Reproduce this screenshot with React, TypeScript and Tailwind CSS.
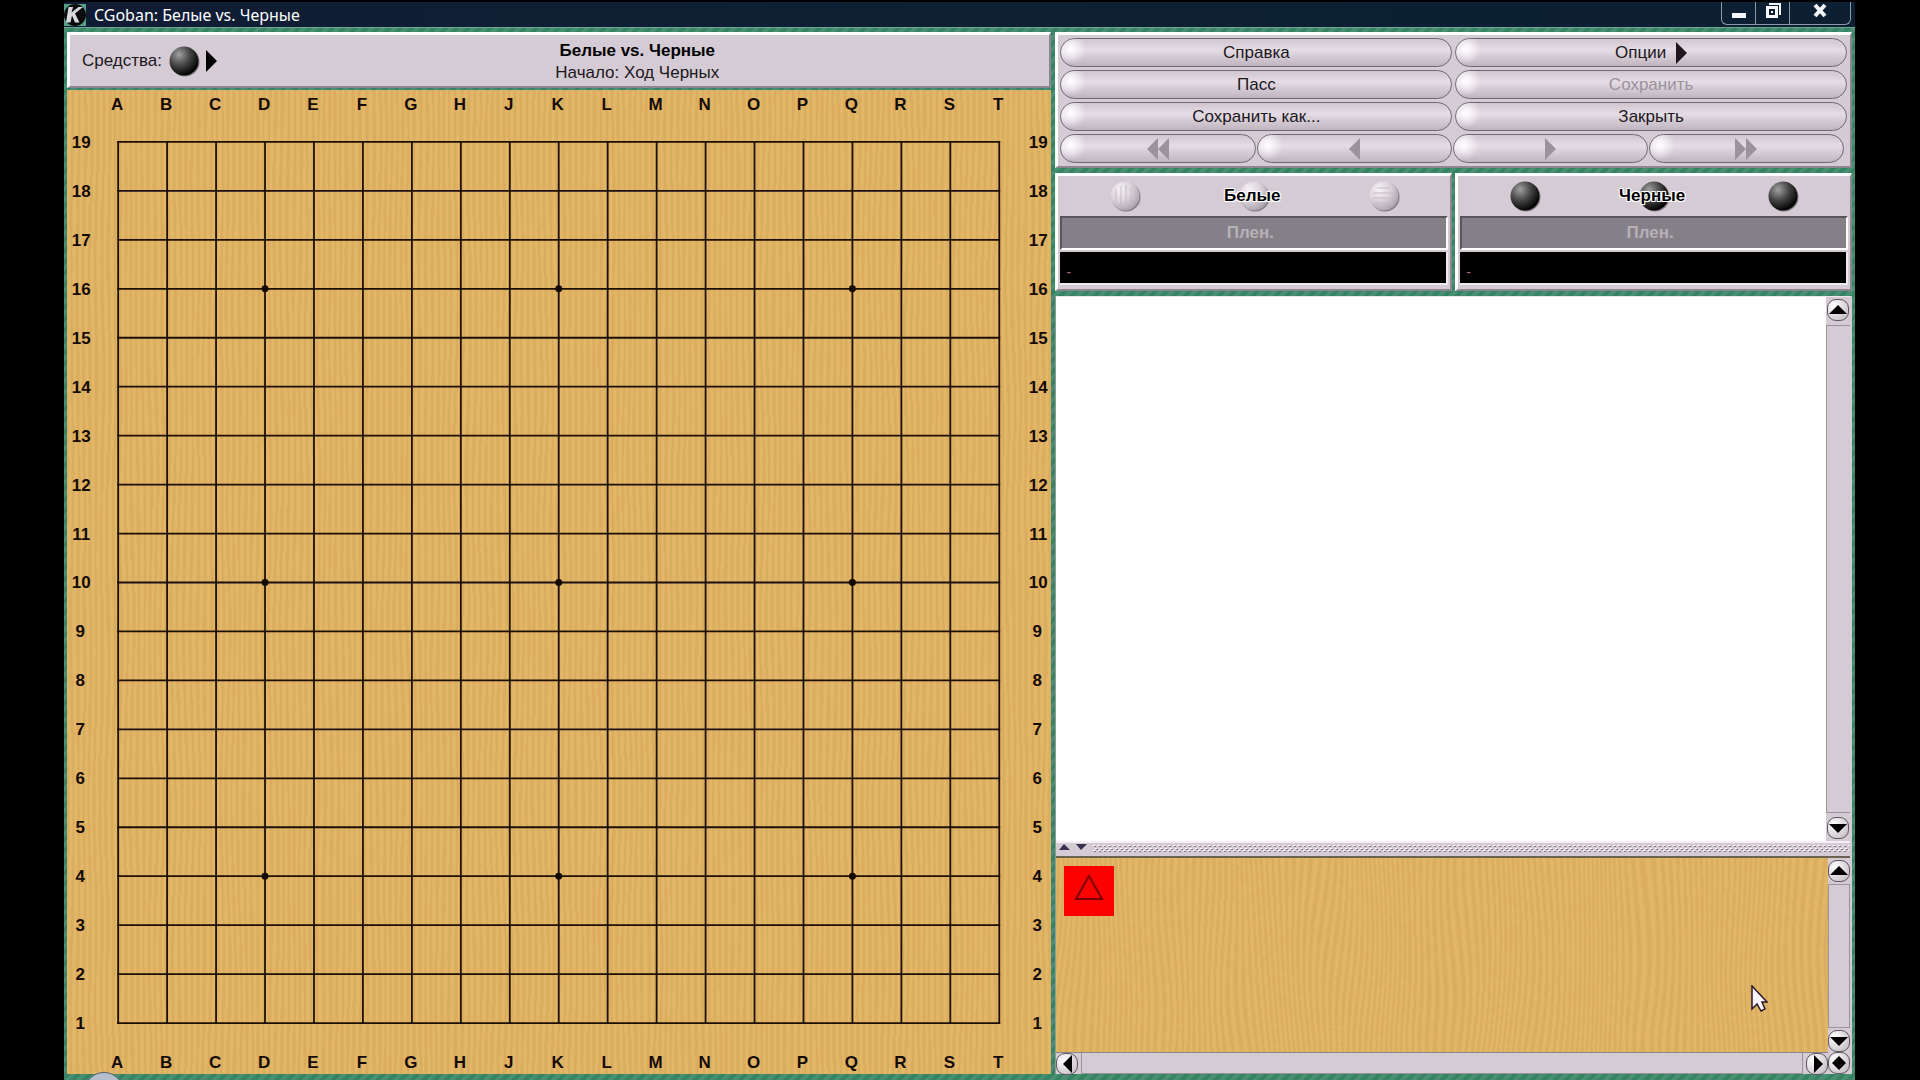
import type { ReactNode } from 'react'

const COLS = ['A', 'B', 'C', 'D', 'E', 'F', 'G', 'H', 'J', 'K', 'L', 'M', 'N', 'O', 'P', 'Q', 'R', 'S', 'T']
const STARS = [3, 9, 15]
const STEP = 49
const LEFT = 51
const TOP = 52

export default function App() {
  return (
    <div className="h-screen bg-black pr-[65px] pl-16 font-['Liberation_Sans',Arial,sans-serif] text-[17px] text-[#1c181c]">
      <WoodFilters />
      <div className="relative flex h-full flex-col overflow-hidden">
        <TitleBar />
        <div className="flex min-h-0 flex-1 gap-1 bg-[#3d8a6c] bg-[repeating-linear-gradient(135deg,#4a8f74_0px,#4a8f74_3px,#348463_5px,#348463_8px)] px-[3px] pt-1 pb-1.5">
          <div className="flex min-w-0 flex-[985] flex-col gap-0.5">
            <Header />
            <Board />
          </div>
          <div className="flex min-w-0 flex-[797] flex-col gap-[5px]">
            <Controls />
            <div className="flex gap-[3px]">
              <Player name="Белые" color="white" />
              <Player name="Черные" color="black" />
            </div>
            <div className="flex min-h-0 flex-1 flex-col border-l border-[#9b949c] bg-[#d5cbd4] pr-0.5">
              <Chat />
              <Splitter />
              <GameTree />
            </div>
          </div>
        </div>
        <div className="absolute -bottom-8 left-5 size-10 rounded-full border border-[#55606c] bg-[#b4bfce]" />
      </div>
    </div>
  )
}

function TitleBar() {
  return (
    <header className="flex h-7 shrink-0 justify-between border-t-2 border-b border-t-black border-b-[#6fa595] bg-[#10203a] bg-linear-to-r from-[#101c34] via-[#0d2133] to-[#0c1f33]">
      <div className="flex items-center gap-2">
        <svg className="size-[22px]" viewBox="0 0 22 22" aria-hidden="true">
          <rect width="22" height="22" fill="#56a088" />
          <circle cx="11" cy="11" r="11" fill="#0b0b0d" />
          <path d="M4.500 3h4.500l-1.500 5.500 7-5.500h4.500l-8 6.500 4.500 9h-4.500l-3-7-1.500 7h-4.500z" fill="#d8d8dc" />
        </svg>
        <h1 className="font-['Noto_Sans',sans-serif] text-base leading-6 text-white">CGoban: Белые vs. Черные</h1>
      </div>
      <div className="mr-1 flex h-[23px] rounded-b-md border border-t-0 border-[#8b9aa9]">
        <button aria-label="Свернуть" className="flex w-[34px] items-center justify-center border-r border-[#8b9aa9]">
          <svg width="16" height="16" viewBox="0 0 16 16"><path d="M1 8h14v5H1z" fill="#f4f6fa" /></svg>
        </button>
        <button aria-label="Развернуть" className="flex w-[34px] items-center justify-center border-r border-[#8b9aa9] pb-1">
          <svg width="16" height="16" viewBox="0 0 16 16">
            <path d="M4 0h12v12h-2V2H4z" fill="#f4f6fa" />
            <path fillRule="evenodd" d="M1 3h12v12H1zM4 6v6h6V6z" fill="#f4f6fa" />
            <path d="M6 8h2v2H6z" fill="#f4f6fa" />
          </svg>
        </button>
        <button aria-label="Закрыть окно" className="flex w-[60px] items-center justify-center pb-1">
          <svg width="16" height="16" viewBox="0 0 16 16"><path d="M3 2l10 11M13 2L3 13" stroke="#f4f6fa" strokeWidth="4" /></svg>
        </button>
      </div>
    </header>
  )
}

function Panel({ className, children }: { className: string; children: ReactNode }) {
  return (
    <section className={`border-t-[3px] border-r-2 border-b-2 border-l-[3px] border-t-white border-r-[#8d868e] border-b-[#8d868e] border-l-white bg-[#d5cbd4] ${className}`}>
      {children}
    </section>
  )
}

function Header() {
  return (
    <Panel className="flex h-14 items-center">
      <div className="flex items-center gap-1.5 pl-3">
        <span>Средства:</span>
        <button aria-label="Инструмент" className="flex items-center gap-1.5 text-black">
          <Stone color="black" />
          <Triangle dir="right" />
        </button>
      </div>
      <div className="flex-1 pt-0.5 pl-2 text-center leading-[22px]">
        <h2 className="font-bold text-black">Белые vs. Черные</h2>
        <p>Начало: Ход Черных</p>
      </div>
    </Panel>
  )
}

function Board() {
  const right = LEFT + STEP * 18
  const bottom = TOP + STEP * 18
  return (
    <div className="relative min-h-0 flex-1 overflow-hidden bg-[#dfb264]">
      <Wood id="fine" />
      <svg className="relative size-full" viewBox="0 0 985 985" role="img" aria-label="Доска 19 на 19">
        <g stroke="#1c0f04" strokeWidth="1.8" strokeLinecap="square">
          {COLS.map((c, i) => (
            <g key={c}>
              <line x1={LEFT + i * STEP} y1={TOP} x2={LEFT + i * STEP} y2={bottom} />
              <line x1={LEFT} y1={TOP + i * STEP} x2={right} y2={TOP + i * STEP} />
            </g>
          ))}
        </g>
        {STARS.map((x) =>
          STARS.map((y) => <circle key={`${x}-${y}`} cx={LEFT + x * STEP} cy={TOP + y * STEP} r="3.5" fill="#140a02" />),
        )}
        <g className="text-[17px] font-bold" textAnchor="middle" fill="#140a06">
          {COLS.map((c, i) => (
            <g key={c}>
              <text x={LEFT - 1 + i * STEP} y="20">{c}</text>
              <text x={LEFT - 1 + i * STEP} y="979">{c}</text>
              <text x={i < 10 ? 14 : 13} y={TOP + 6 + i * STEP}>{19 - i}</text>
              <text x={i < 10 ? 972 : 971} y={TOP + 6 + i * STEP}>{19 - i}</text>
            </g>
          ))}
        </g>
      </svg>
    </div>
  )
}

function Controls() {
  return (
    <Panel className="flex flex-col gap-[3px] p-[3px] pl-0.5">
      <div className="grid grid-cols-2 gap-[3px]">
        <Pill>Справка</Pill>
        <Pill>Опции <Triangle dir="right" /></Pill>
        <Pill>Пасс</Pill>
        <Pill disabled>Сохранить</Pill>
        <Pill>Сохранить как...</Pill>
        <Pill>Закрыть</Pill>
      </div>
      <div className="mr-[3px] grid grid-cols-4 gap-px">
        <Pill disabled label="В начало"><Triangle dir="left" double /></Pill>
        <Pill disabled label="Назад"><Triangle dir="left" /></Pill>
        <Pill disabled label="Вперед"><Triangle dir="right" /></Pill>
        <Pill disabled label="В конец"><Triangle dir="right" double /></Pill>
      </div>
    </Panel>
  )
}

function Pill({ children, disabled, label }: { children: ReactNode; disabled?: boolean; label?: string }) {
  return (
    <button
      disabled={disabled}
      aria-label={label}
      className="relative flex h-[29px] items-center justify-center gap-2.5 overflow-hidden rounded-full border border-[#6f6872] bg-linear-to-b from-[#cfc6d0] via-[#e5dce5] via-40% to-[#beb5c0] text-[#1c181c] disabled:text-[#9a939c]"
    >
      <span className="absolute top-0 left-0 size-7 bg-radial-[at_35%_35%] from-white to-transparent to-60%" />
      {children}
    </button>
  )
}

function Triangle({ dir, double }: { dir: 'left' | 'right'; double?: boolean }) {
  const w = double ? 22 : 11
  const shape = dir === 'right' ? 'M0 0L11 11L0 22z' : 'M11 0L0 11L11 22z'
  return (
    <svg width={w} height="22" viewBox={`0 0 ${w} 22`} fill="currentColor" aria-hidden="true">
      <path d={shape} />
      {double && <path d={shape} transform="translate(11 0)" />}
    </svg>
  )
}

function Stone({ color, stripes }: { color: 'white' | 'black'; stripes?: 'v' | 'h' }) {
  const id = `stone-${color}-${stripes ?? 'plain'}`
  const white = color === 'white'
  return (
    <svg className="size-8 shrink-0" viewBox="0 0 32 32" aria-hidden="true">
      <defs>
        <radialGradient id={id} cx="0.33" cy="0.28" r="0.75">
          <stop offset="0" stopColor={white ? '#f6f2f6' : '#a0a0a0'} />
          <stop offset="0.5" stopColor={white ? '#dcd5dc' : '#464646'} />
          <stop offset="1" stopColor={white ? '#aca4ad' : '#000000'} />
        </radialGradient>
      </defs>
      <circle cx="17" cy="17" r="14.500" fill="#5c5560" opacity="0.7" />
      <circle cx="16" cy="16" r="14.500" fill={`url(#${id})`} />
      {stripes === 'v' && <path d="M7 9v13M12 6v21M17 5v23M22 7v18M26 11v10" stroke="#c3bbc4" strokeWidth="1" />}
      {stripes === 'h' && <path d="M9 8h13M5 13h21M5 18h22M7 23h18" stroke="#c3bbc4" strokeWidth="1" />}
    </svg>
  )
}

function Player({ name, color }: { name: string; color: 'white' | 'black' }) {
  const white = color === 'white'
  return (
    <Panel className="flex h-[118px] min-w-0 flex-1 flex-col px-0.5">
      <div className="relative grid h-10 grid-cols-3 items-center justify-items-center">
        <Stone color={color} stripes={white ? 'v' : undefined} />
        <Stone color={color} />
        <Stone color={color} stripes={white ? 'h' : undefined} />
        <h3 className="absolute inset-0 flex items-center justify-center pr-1 font-bold text-black [text-shadow:-1px_-1px_0_#fff,1px_-1px_0_#fff,-1px_1px_0_#fff,1px_1px_0_#fff,0_0_2px_#fff]">
          {name}
        </h3>
      </div>
      <div className="flex h-[34px] items-center justify-center border-2 border-t-[#5b545d] border-r-white border-b-white border-l-[#5b545d] bg-[#858087] pr-2 font-bold text-[#b7b0b8]">
        Плен.
      </div>
      <div className="mt-0.5 flex h-[33px] items-center border-r-2 border-b-2 border-[#f0eaf0] bg-black pt-2 pl-1.5 text-sm leading-none text-[#b06a76]">
        -
      </div>
    </Panel>
  )
}

const ARROWS = {
  up: 'M2 15L11 6L20 15z',
  down: 'M2 7L11 16L20 7z',
  left: 'M16 2L7 11L16 20z',
  right: 'M8 2L17 11L8 20z',
  diamond: 'M11 4L18 11L11 18L4 11z',
}

function ScrollButton({ dir, label }: { dir: keyof typeof ARROWS; label: string }) {
  return (
    <button aria-label={label} className="flex size-[22px] shrink-0 items-center justify-center rounded-[9px] border border-[#5e5861] bg-radial-[at_30%_30%] from-white to-[#bdb5be] text-black">
      <svg className="size-[22px] shrink-0" viewBox="0 0 22 22" fill="currentColor"><path d={ARROWS[dir]} /></svg>
    </button>
  )
}

function Chat() {
  return (
    <div className="flex min-h-0 flex-[545] border-t border-[#ece6ec]">
      <textarea aria-label="Комментарии" className="min-w-0 flex-1 resize-none bg-white p-1 outline-none" />
      <div className="flex w-6 flex-col items-center py-0.5">
        <ScrollButton dir="up" label="Вверх" />
        <div className="my-1 w-full flex-1 border-y border-l border-[#9a939c]" />
        <ScrollButton dir="down" label="Вниз" />
      </div>
    </div>
  )
}

function Splitter() {
  return (
    <div className="flex h-[17px] shrink-0 items-center gap-1.5 border-t-2 border-b-2 border-t-[#f5f0f5] border-b-[#6d6250] pl-[3px]">
      <button aria-label="Свернуть верх" className="pb-1">
        <svg width="11" height="6" viewBox="0 0 11 6"><path d="M0 6L5 0L11 6z" fill="#37304c" /></svg>
      </button>
      <button aria-label="Свернуть низ" className="pb-1">
        <svg width="11" height="6" viewBox="0 0 11 6"><path d="M0 0L5 6L11 0z" fill="#37304c" /></svg>
      </button>
      <svg className="h-2 flex-1" aria-hidden="true">
        <pattern id="grip" width="5" height="5" patternUnits="userSpaceOnUse">
          <path d="M0 0h2v1H0zM2 3h2v1H2z" fill="#fff" />
          <path d="M1 1h2v1H1zM3 4h2v1H3z" fill="#7d7684" />
        </pattern>
        <rect width="100%" height="8" fill="url(#grip)" />
      </svg>
    </div>
  )
}

function GameTree() {
  return (
    <div className="grid min-h-0 flex-[217] grid-cols-[1fr_22px] grid-rows-[1fr_22px]">
      <div className="relative overflow-hidden bg-[#dfb264] p-2">
        <Wood id="wavy" />
        <button aria-label="Начало партии" className="relative block size-[50px] bg-[#fb0200]">
          <svg className="size-full" viewBox="0 0 50 50"><path d="M25 10L12 33H38z" fill="none" stroke="#7a0000" strokeWidth="2" /></svg>
        </button>
        <svg className="absolute right-[60px] bottom-10 h-[27px] w-[17px]" viewBox="0 0 17 27" aria-hidden="true">
          <path d="M1 1V24L6 19L10 26L14 24L11 17H16z" fill="#f8f4fa" stroke="#2b1a2b" strokeWidth="1.5" />
        </svg>
      </div>
      <div className="flex flex-col items-center pt-0.5">
        <ScrollButton dir="up" label="Дерево вверх" />
        <div className="my-0.5 w-full flex-1 border border-[#9a939c]" />
        <ScrollButton dir="down" label="Дерево вниз" />
      </div>
      <div className="flex border-t border-[#8d868e]">
        <ScrollButton dir="left" label="Дерево влево" />
        <div className="mx-[3px] flex-1 border-x border-b border-[#9a939c]" />
        <ScrollButton dir="right" label="Дерево вправо" />
      </div>
      <ScrollButton dir="diamond" label="К текущему ходу" />
    </div>
  )
}

// Even stripes bent by slow noise give the vertical grain of the board.
function WoodFilters() {
  return (
    <svg className="absolute size-0" aria-hidden="true">
      <defs>
        <linearGradient id="grain-shade">
          <stop offset="0" stopColor="#e5b969" />
          <stop offset="0.5" stopColor="#d8aa5d" />
          <stop offset="1" stopColor="#e5b969" />
        </linearGradient>
        <pattern id="grain" width="6" height="40" patternUnits="userSpaceOnUse">
          <rect width="6" height="40" fill="url(#grain-shade)" />
        </pattern>
        <filter id="fine" x="0" y="0" width="100%" height="100%">
          <feTurbulence type="fractalNoise" baseFrequency="0.03 0.006" numOctaves="1" seed="4" />
          <feDisplacementMap in="SourceGraphic" scale="10" xChannelSelector="R" />
        </filter>
        <filter id="wavy" x="0" y="0" width="100%" height="100%">
          <feTurbulence type="fractalNoise" baseFrequency="0.014 0.005" numOctaves="1" seed="9" />
          <feDisplacementMap in="SourceGraphic" scale="50" xChannelSelector="R" />
        </filter>
      </defs>
    </svg>
  )
}

function Wood({ id }: { id: 'fine' | 'wavy' }) {
  return (
    <svg className="absolute -inset-10 h-[calc(100%+80px)] w-[calc(100%+80px)]" aria-hidden="true">
      <rect width="100%" height="100%" fill="url(#grain)" filter={`url(#${id})`} />
    </svg>
  )
}
